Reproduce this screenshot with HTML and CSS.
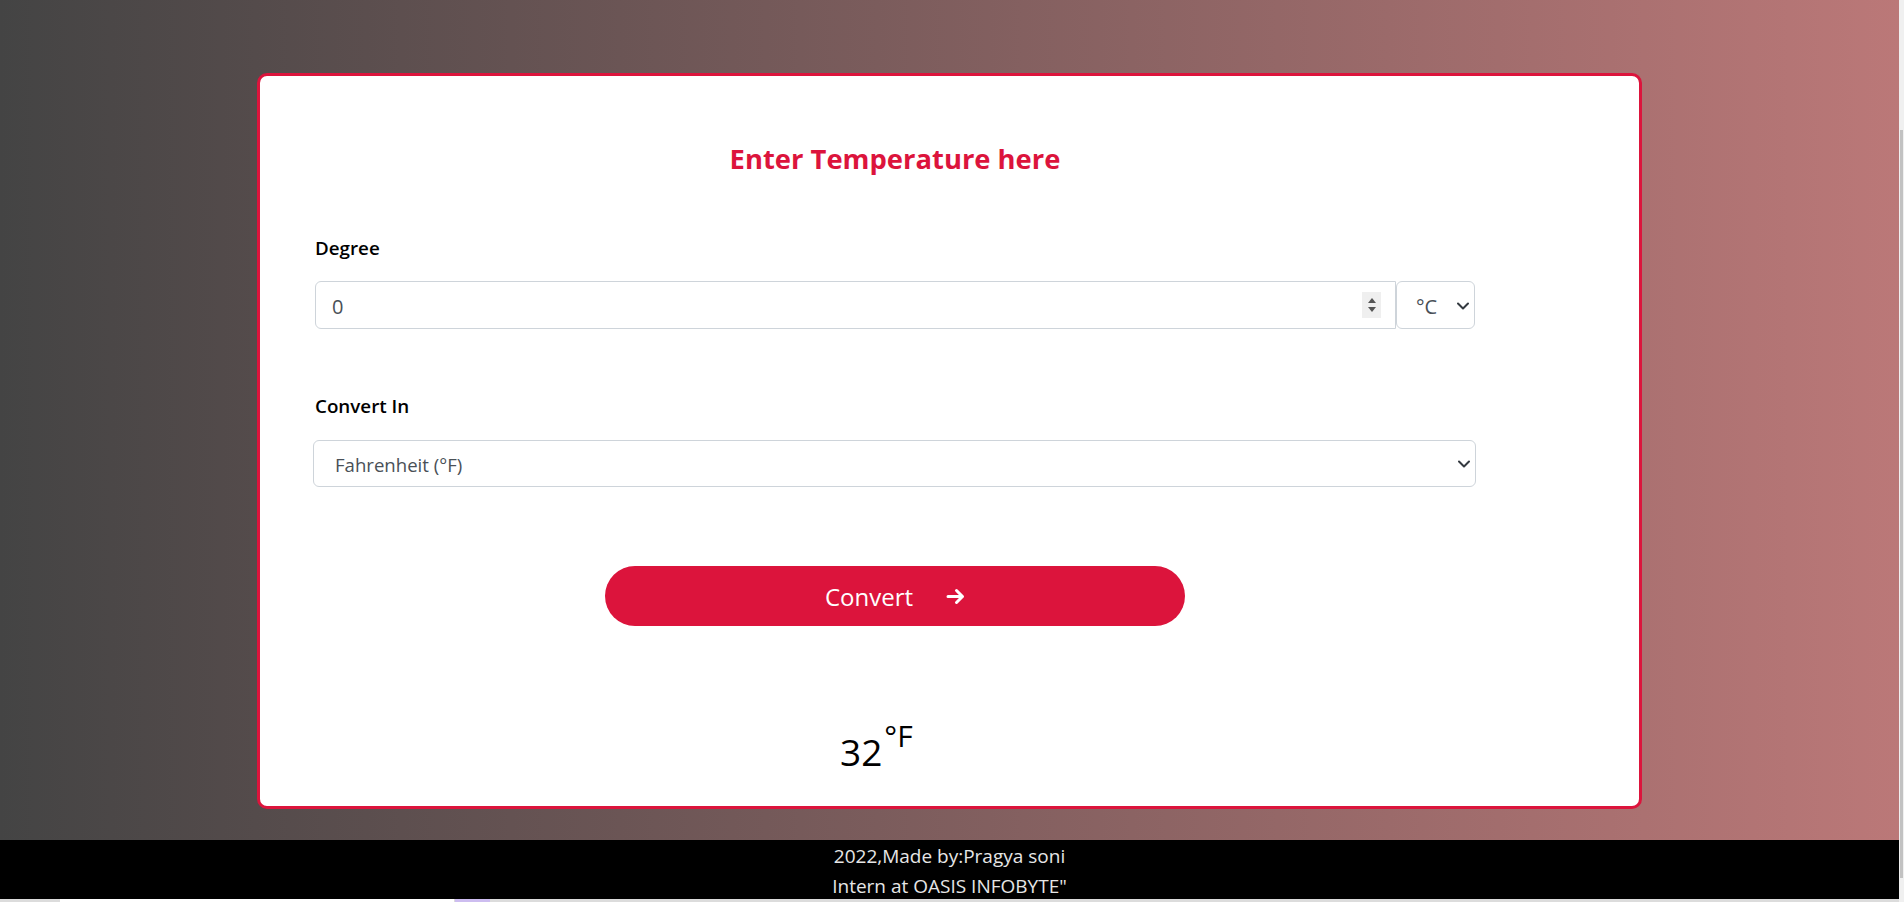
FILE: index.html
```html
<!DOCTYPE html>
<html lang="en">
<head>
<meta charset="utf-8">
<title>Temperature Converter</title>
<link rel="stylesheet" href="styles.css">
</head>
<body>
<div class="viewport">
  <div class="page">
    <main class="stage">
      <section class="card">
        <div class="content">
          <h3 class="title">Enter Temperature here</h3>
          <label class="label label-degree" for="deg">Degree</label>
          <div class="input-group">
            <div class="num-field">
              <input id="deg" class="num-input" type="text" value="0">
              <span class="spin">
                <svg class="tri" width="8" height="5" viewBox="0 0 8 5"><path d="M4 0 L8 5 L0 5 Z" fill="#555"/></svg>
                <svg class="tri" width="8" height="5" viewBox="0 0 8 5"><path d="M0 0 L8 0 L4 5 Z" fill="#555"/></svg>
              </span>
            </div>
            <div class="select-wrap select-unit">
              <select class="select"><option>°C</option><option>°F</option><option>K</option></select>
              <svg class="chev" width="12" height="8" viewBox="0 0 12 8"><path d="M1 1.5 L6 6.5 L11 1.5" fill="none" stroke="#343a40" stroke-width="2" stroke-linecap="round" stroke-linejoin="round"/></svg>
            </div>
          </div>
          <label class="label label-convert">Convert In</label>
          <div class="select-wrap select-target">
            <select class="select"><option>Fahrenheit (°F)</option><option>Celsius (°C)</option><option>Kelvin (K)</option></select>
            <svg class="chev" width="12" height="8" viewBox="0 0 12 8"><path d="M1 1.5 L6 6.5 L11 1.5" fill="none" stroke="#343a40" stroke-width="2" stroke-linecap="round" stroke-linejoin="round"/></svg>
          </div>
          <button class="convert" type="button">
            <span>Convert</span>
            <svg class="arrow" width="19" height="19" viewBox="0 0 19 19"><path d="M2 9.5 H16.5 M10.5 3.5 L16.5 9.5 L10.5 15.5" fill="none" stroke="#fff" stroke-width="3" stroke-linecap="round" stroke-linejoin="round"/></svg>
          </button>
          <div class="result">32<sup class="unit">°F</sup></div>
        </div>
      </section>
    </main>
    <footer class="footer">
      <p class="foot-line">2022,Made by:Pragya soni</p>
      <p class="foot-line">Intern at OASIS INFOBYTE"</p>
    </footer>
    <div class="bottom-strip"><span class="strip-white"></span><span class="strip-purple"></span></div>
  </div>
  <div class="scrollbar"><div class="thumb"></div></div>
</div>
</body>
</html>
```

FILE: styles.css
```css
* { box-sizing: border-box; }

html, body {
  margin: 0;
  padding: 0;
  height: 902px;
  overflow: hidden;
}

body {
  font-family: "Open Sans", "Noto Sans", sans-serif;
  color: #212529;
}

.viewport {
  display: grid;
  grid-template-columns: 1fr 5px;
  height: 902px;
}

.page {
  display: flex;
  flex-direction: column;
  height: 902px;
}

.stage {
  height: 840px;
  flex: none;
  padding-top: 73px;
  background: linear-gradient(to right, #444444 0%, #bb7878 100%);
}

.card {
  width: 1385px;
  height: 736px;
  margin: 0 auto;
  background: #fff;
  border: 3px solid #dc143c;
  border-radius: 10px;
  padding: 67px 0 0 55px;
}

.content {
  width: 1160px;
}

.title {
  margin: 0 0 60px;
  font-size: 27.4px;
  line-height: 1.2;
  font-weight: 700;
  color: #dc143c;
  text-align: center;
}

.label {
  display: block;
  font-size: 18.8px;
  line-height: 24px;
  font-weight: 600;
  color: #000;
}

.label-degree { margin-bottom: 21px; }
.label-convert { margin-bottom: 22px; }

.input-group {
  display: flex;
  height: 48px;
  margin-bottom: 65px;
}

.num-field {
  flex: 1;
  display: flex;
  align-items: center;
  border: 1px solid #ced4da;
  border-radius: 6px 0 0 6px;
  padding: 0 14px 0 16px;
}

.num-input {
  flex: 1;
  border: none;
  outline: none;
  padding: 4px 0 0;
  margin: 0;
  background: transparent;
  font-family: inherit;
  font-size: 20px;
  color: #495057;
}

.spin {
  width: 19px;
  height: 26px;
  background: #efefef;
  display: flex;
  flex-direction: column;
  align-items: center;
  justify-content: center;
  gap: 4px;
}

.tri { display: block; }

.select-wrap {
  position: relative;
  border: 1px solid #ced4da;
  border-radius: 6px;
}

.select {
  appearance: none;
  -webkit-appearance: none;
  border: none;
  outline: none;
  background: transparent;
  width: 100%;
  height: 100%;
  margin: 0;
  font-family: inherit;
  font-size: 20px;
  color: #495057;
}

.chev {
  position: absolute;
  right: 5px;
  top: 50%;
  margin-top: -3px;
  pointer-events: none;
}

.select-unit {
  width: 79px;
  height: 48px;
}

.select-unit .select {
  padding: 4px 0 0 19px;
}

.select-target {
  width: 1163px;
  height: 47px;
  margin-left: -2px;
  margin-bottom: 79px;
}

.select-target .select {
  padding: 2px 0 0 21px;
  font-size: 18.6px;
}

.convert {
  display: flex;
  align-items: center;
  justify-content: center;
  gap: 33px;
  width: 580px;
  height: 60px;
  margin-left: 290px;
  border: none;
  border-radius: 30px;
  background: #dc143c;
  color: #fff;
  font-family: inherit;
  font-size: 24px;
  padding: 2px 0 0;
}

.arrow { display: block; }

.result {
  margin: 104px 0 0 525px;
  font-size: 37px;
  line-height: 1.2;
  color: #000;
}

.unit {
  font-size: 30px;
  vertical-align: 19px;
  line-height: 0;
  margin-left: 2px;
}

.footer {
  height: 59px;
  flex: none;
  background: #000;
  color: #e6e6e6;
  text-align: center;
  font-size: 19px;
  line-height: 30px;
  padding-top: 1px;
  overflow: hidden;
}

.foot-line { margin: 0; }

.bottom-strip {
  height: 3px;
  flex: none;
  background: #dcdcdc;
  display: flex;
}

.strip-white {
  width: 394px;
  margin-left: 60px;
  background: #fff;
}

.strip-purple {
  width: 35px;
  margin-left: 1px;
  background: #cdbdf0;
}

.scrollbar {
  background: #f0f0f0;
  height: 902px;
}

.thumb {
  margin: 130px 1px 0;
  height: 748px;
  background: #c2c2c2;
}
```
